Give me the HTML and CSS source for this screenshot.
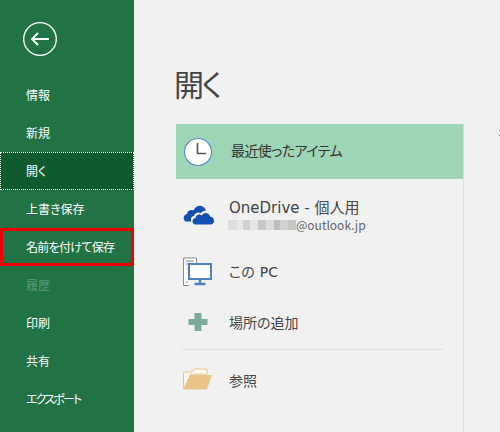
FILE: index.html
```html
<!DOCTYPE html>
<html lang="ja">
<head>
<meta charset="utf-8">
<title>開く</title>
<link rel="stylesheet" href="styles.css">
</head>
<body>
<div class="app">
  <aside class="side">
    <div class="back">
      <svg width="36" height="36" viewBox="0 0 36 36" fill="none" stroke="#fff">
        <circle cx="18" cy="18" r="16.300" stroke-width="1.300"/>
        <path d="M10 18H27M16 12L10 18L16 24" stroke-width="1.800"/>
      </svg>
    </div>
    <nav class="nav">
      <div class="nav-item">情報</div>
      <div class="nav-item">新規</div>
      <div class="nav-item active">開く</div>
      <div class="nav-item">上書き保存</div>
      <div class="nav-item marked">名前を付けて保存</div>
      <div class="nav-item disabled">履歴</div>
      <div class="nav-item">印刷</div>
      <div class="nav-item">共有</div>
      <div class="nav-item kana">エクスポート</div>
    </nav>
  </aside>
  <main class="main">
    <h1 class="title">開く</h1>
    <div class="panel">
      <div class="row recent">
        <svg class="icon" width="30" height="30" viewBox="0 0 30 30">
          <circle cx="15" cy="15" r="13.500" fill="#fff" stroke="#5b8fc9" stroke-width="1.200"/>
          <path d="M14.500 6V16.500H23" fill="none" stroke="#595959" stroke-width="1.600"/>
        </svg>
        <span class="label">最近使ったアイテム</span>
      </div>
      <div class="row onedrive">
        <svg class="icon" width="32" height="22" viewBox="0 0 32 22">
          <path fill="#1150b0" d="M3 18.500C-.5 17.500 0 11.500 4 11C4.500 7.500 8 6 10.500 7.500C13 1 21 1 23 7.500C21 7.500 19 8.500 18 10C15 8.500 11.500 10 11 13C8.500 13 7 16 8.500 18.500Z"/>
          <path fill="#1150b0" d="M12.500 21.500C8.500 21.500 8.500 15.500 12.500 15C13 11.500 16.500 10.500 19 12.500C20.500 8.500 26.500 9.500 27 13.500C32 13.500 32.500 21.500 27.500 21.500Z"/>
        </svg>
        <div class="stack">
          <span class="label wide">OneDrive - 個人用</span>
          <span class="mail"><span class="blur"></span>@outlook.jp</span>
        </div>
      </div>
      <div class="row pc">
        <svg class="icon" width="30" height="30" viewBox="0 0 30 30">
          <path d="M.5 1H13.500V7M.5 1V28.500H6" fill="#fff" stroke="#8c8c8c"/>
          <path d="M3 4H11M3 7H11M3 25H5" stroke="#8c8c8c"/>
          <rect x="6" y="7" width="22" height="15" fill="#fff" stroke="#4d82bd" stroke-width="2"/>
          <path d="M17 22V26M11.500 27H22.500" stroke="#4d82bd" stroke-width="2.400"/>
        </svg>
        <span class="label wide">この PC</span>
      </div>
      <div class="row add">
        <svg class="icon" width="30" height="20" viewBox="0 0 30 20">
          <path fill="#7cab9b" d="M11.500 1H18.500V7H24.500V13H18.500V19H11.500V13H5.500V7H11.500Z"/>
        </svg>
        <span class="label">場所の追加</span>
      </div>
      <div class="divider"></div>
      <div class="row browse">
        <svg class="icon" width="30" height="22" viewBox="0 0 30 22">
          <path d="M.5 21V4H9L12 1H24V6H8L.5 21Z" fill="#fdfbf4" stroke="#e9c688"/>
          <path d="M7 7H29L24 21.500H.5Z" fill="#eac587"/>
        </svg>
        <span class="label">参照</span>
      </div>
    </div>
    <div class="edge"></div>
    <div class="tick"></div>
  </main>
</div>
</body>
</html>
```
FILE: styles.css
```css
html, body {
  margin: 0;
  padding: 0;
  height: 100%;
  overflow: hidden;
}
body {
  font-family: "Noto Sans CJK JP", "Noto Sans", sans-serif;
  font-feature-settings: "palt";
  background: #f1f1f1;
}
.app {
  display: flex;
  width: 500px;
  height: 432px;
  overflow: hidden;
}
.side {
  width: 134px;
  flex: none;
  background: #217346;
  color: #fff;
}
.back {
  height: 76px;
  padding: 21px 0 0 22px;
  box-sizing: border-box;
}
.back svg {
  display: block;
}
.nav-item {
  height: 38px;
  line-height: 38px;
  padding-left: 26px;
  font-size: 12px;
  box-sizing: border-box;
  white-space: nowrap;
}
.nav-item.active {
  background: #0f5a2f;
  outline: 1px dotted #fff;
  outline-offset: -1px;
}
.nav-item.marked {
  outline: 3px solid #ee0000;
  outline-offset: -3px;
  letter-spacing: -.7px;
}
.nav-item.disabled {
  color: #5b9a78;
}
.nav-item.kana {
  letter-spacing: -1.800px;
}
.main {
  position: relative;
  flex: 1;
  padding-left: 42px;
}
.title {
  margin: 0 0 0 -2px;
  height: 124px;
  padding-top: 62px;
  box-sizing: border-box;
  font-size: 30px;
  line-height: 42px;
  font-weight: 400;
  color: #444;
  letter-spacing: -2px;
}
.panel {
  width: 287px;
  color: #444;
}
.row {
  display: flex;
  align-items: center;
  padding-left: 7px;
}
.icon {
  flex: none;
  display: block;
}
.recent {
  height: 55px;
  background: #9fd5b7;
  color: #333;
}
.label {
  font-size: 14px;
  line-height: 20px;
  white-space: nowrap;
  margin-left: 16px;
}
.recent .label {
  margin-left: 18px;
  margin-bottom: 4px;
  letter-spacing: -.6px;
}
.wide {
  font-family: "DejaVu Sans", "Noto Sans CJK JP", sans-serif;
  font-size: 15px;
}
.onedrive {
  height: 72px;
}
.onedrive .icon {
  margin-top: -3px;
}
.stack {
  display: flex;
  flex-direction: column;
  margin-left: 14px;
}
.stack .label {
  line-height: 19px;
  margin-left: 0;
}
.mail {
  display: flex;
  align-items: center;
  font-size: 12px;
  line-height: 14px;
  color: #666;
  margin-left: -1px;
}
.blur {
  display: block;
  width: 68px;
  height: 10px;
  background: linear-gradient(90deg, #ddd 0 9px, #e8e8e8 9px 15px, #d0d0d0 15px 22px, #e6e6e6 22px 30px, #c8c8c8 30px 38px, #dcdcdc 38px 46px, #bdbdbd 46px 52px, #d2d2d2 52px 60px, #c6c6c6 60px 68px);
}
.pc {
  height: 42px;
}
.pc .label {
  font-size: 14px;
  letter-spacing: .2px;
}
.add {
  height: 56px;
  padding-top: 2px;
  box-sizing: border-box;
}
.add .label {
  margin-bottom: 1px;
}
.divider {
  height: 1px;
  background: #dedede;
  margin: 0 20px 0 6px;
}
.browse {
  height: 60px;
}
.browse .icon {
  margin-bottom: 2px;
}
.browse .label {
  margin-bottom: 1px;
}
.edge {
  position: absolute;
  left: 329px;
  top: 123px;
  bottom: 0;
  width: 1px;
  background: #dcdcdc;
}
.tick {
  position: absolute;
  right: 0;
  top: 130px;
  width: 1px;
  height: 4px;
  border-top: 1px solid #888;
  border-bottom: 1px solid #888;
}
```
